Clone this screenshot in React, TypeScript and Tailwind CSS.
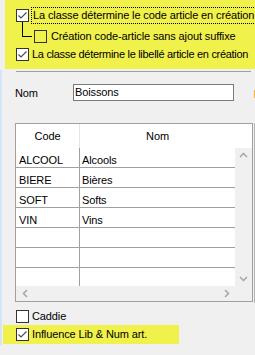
import React from "react";

const Check = ({ checked, bg = "bg-white" }: { checked?: boolean; bg?: string }) => (
  <div className={`w-[13px] h-[13px] border border-[#333333] ${bg} shrink-0 flex items-center justify-center`}>
    {checked && (
      <svg width="11" height="11" viewBox="0 0 11 11">
        <path d="M1.5 5.5 L4 8 L9.5 2.5" fill="none" stroke="#4d4d4d" strokeWidth="1.2" />
      </svg>
    )}
  </div>
);

const rows = [
  ["ALCOOL", "Alcools"],
  ["BIERE", "Bières"],
  ["SOFT", "Softs"],
  ["VIN", "Vins"],
  ["", ""],
  ["", ""],
  ["", ""],
];

export default function App() {
  return (
    <div
      className="relative w-[255px] h-[355px] bg-[#f0f0f0] overflow-hidden text-black text-[11px] leading-[13px] tracking-[-0.12px]"
      style={{ fontFamily: '"Liberation Sans", Arial, sans-serif' }}
    >
      {/* left edge strip */}
      <div className="absolute left-0 top-[70px] w-[2px] h-[275px] bg-[#d3e5f6]" />
      {/* right edge line */}
      <div className="absolute left-[254px] top-[90px] w-[1px] h-[8px] bg-[#f0b040]" />
      <div className="absolute left-[254px] top-[123px] w-[1px] h-[180px] bg-[#b4b4b4]" />

      {/* yellow top panel */}
      <div className="ml-[5px] w-[250px] h-[69px] bg-[#f1f14c] pt-[9px] pl-[11px] flex flex-col">
        <div className="flex items-center h-[13px]">
          <Check checked />
          <div className="ml-[2px] px-[1px] h-[17px] border border-dotted border-black flex items-center whitespace-nowrap">
            La classe détermine le code article en création
          </div>
        </div>
        <div className="flex h-[21px]">
          <div className="ml-[6px] w-[10px] h-[15px] border-l border-b border-black" />
        </div>
        <div className="absolute left-[34px] top-[30px] flex items-center h-[13px]">
          <Check bg="bg-[#f1f14c]" />
          <span className="ml-[4px] whitespace-nowrap">Création code-article sans ajout suffixe</span>
        </div>
        <div className="flex items-center h-[13px] mt-[5px]">
          <Check checked />
          <span className="ml-[3px] whitespace-nowrap tracking-[-0.3px]">La classe détermine le libellé article en création</span>
        </div>
      </div>

      {/* separator */}
      <div className="ml-[16px] mt-[2px] w-[235px] h-[1px] bg-[#a0a0a0]" />

      {/* Nom row */}
      <div className="flex items-center mt-[12px] h-[17px]">
        <span className="ml-[15px] w-[58px] pt-[2px]">Nom</span>
        <div className="w-[161px] h-[17px] border border-[#7a7a7a] bg-white flex items-center pl-[1px]">
          Boissons
        </div>
      </div>

      {/* grid */}
      <div className="ml-[15px] mt-[22px] w-[238px] h-[179px] border border-[#a0a0a0] bg-[#f0f0f0] flex flex-col">
        <div className="flex h-[24px] bg-white">
          <div className="w-[64px] border-r border-[#e5e5e5] flex items-center justify-center">Code</div>
          <div className="w-[155px] flex items-center justify-center">Nom</div>
          <div className="flex-1 bg-white" />
        </div>
        <div className="flex h-[138px]">
          <div className="w-[219px] bg-white flex flex-col overflow-hidden">
            {rows.map((r, i) => (
              <div key={i} className="flex h-[20px] shrink-0 border-b border-[#a0a0a0]">
                <div className="w-[64px] border-r border-[#a0a0a0] pl-[3px] pt-[6px]">{r[0]}</div>
                <div className="flex-1 pl-[2px] pt-[6px]">{r[1]}</div>
              </div>
            ))}
          </div>
          <div className="flex-1 flex flex-col items-center justify-between py-[4px]">
            <svg width="9" height="6" viewBox="0 0 9 6">
              <path d="M1 5 L4.5 1.5 L8 5" fill="none" stroke="#a6a6a6" strokeWidth="1.5" />
            </svg>
            <svg width="9" height="6" viewBox="0 0 9 6">
              <path d="M1 1 L4.5 4.5 L8 1" fill="none" stroke="#a6a6a6" strokeWidth="1.5" />
            </svg>
          </div>
        </div>
        <div className="flex-1 flex items-center justify-between px-[6px]">
          <svg width="6" height="9" viewBox="0 0 6 9">
            <path d="M5 1 L1.5 4.5 L5 8" fill="none" stroke="#a6a6a6" strokeWidth="1.5" />
          </svg>
          <svg width="6" height="9" viewBox="0 0 6 9" className="mr-[16px]">
            <path d="M1 1 L4.5 4.5 L1 8" fill="none" stroke="#a6a6a6" strokeWidth="1.5" />
          </svg>
        </div>
      </div>

      {/* Caddie */}
      <div className="flex items-center ml-[16px] mt-[8px] h-[13px]">
        <Check />
        <span className="ml-[3px]">Caddie</span>
      </div>

      {/* Influence */}
      <div className="ml-[3px] mt-[2px] w-[176px] h-[19px] bg-[#f1f14c] flex items-center pl-[13px]">
        <Check checked />
        <span className="ml-[3px] whitespace-nowrap">Influence Lib &amp; Num art.</span>
      </div>
    </div>
  );
}
